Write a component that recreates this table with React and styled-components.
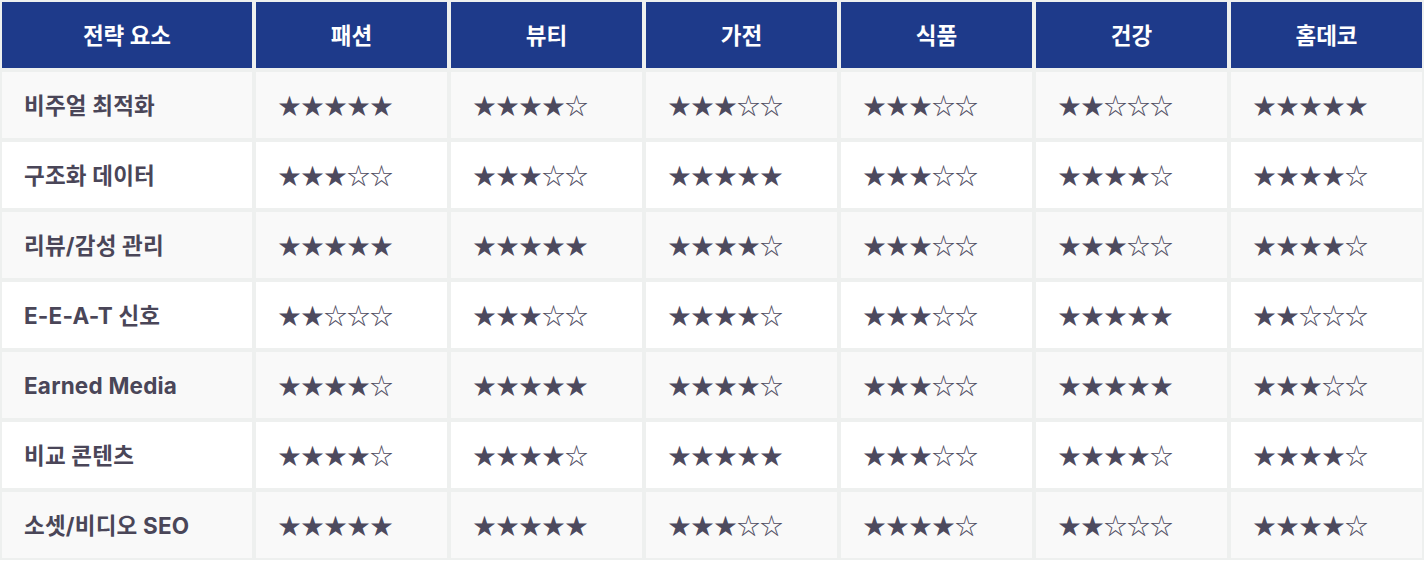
import React from "react";
import styled, { createGlobalStyle } from "styled-components";

const Global = createGlobalStyle`
  html, body { margin: 0; padding: 0; background: #ffffff; }
  body { font-family: "Inter", "Noto Sans CJK KR", sans-serif; }
`;

const Table = styled.table`
  width: 1424px;
  border-collapse: separate;
  border-spacing: 0;
  table-layout: fixed;
`;

const HeadCell = styled.th`
  box-sizing: border-box;
  height: 70px;
  padding: 0;
  border: 2px solid #eef0ef;
  background: #1e3a8a;
  color: #ffffff;
  font-family: "Inter", "Noto Sans CJK KR", sans-serif;
  font-size: 22.5px;
  line-height: 1.2;
  font-weight: 700;
  text-align: center;
  width: ${(p) => (p.$first ? "254px" : "auto")};
`;

const Row = styled.tr`
  background: ${(p) => (p.$alt ? "#f9f9f9" : "#ffffff")};
`;

const LabelCell = styled.td`
  box-sizing: border-box;
  height: 70px;
  padding: 0 0 0 22px;
  border: 2px solid #eef0ef;
  color: #4a4658;
  font-family: "Inter", "Noto Sans CJK KR", sans-serif;
  font-size: 22.5px;
  line-height: 1.2;
  font-weight: 700;
  letter-spacing: 0.2px;
  text-align: left;
`;

const StarCell = styled.td`
  box-sizing: border-box;
  height: 70px;
  padding: 0 0 2px 22px;
  border: 2px solid #eef0ef;
  color: #4d4a5e;
  font-family: "Noto Sans CJK KR", sans-serif;
  font-size: 23px;
  line-height: 1;
  text-align: left;
  white-space: nowrap;
`;

const columns = ["패션", "뷰티", "가전", "식품", "건강", "홈데코"];

const rows = [
  ["비주얼 최적화", [5, 4, 3, 3, 2, 5]],
  ["구조화 데이터", [3, 3, 5, 3, 4, 4]],
  ["리뷰/감성 관리", [5, 5, 4, 3, 3, 4]],
  ["E-E-A-T 신호", [2, 3, 4, 3, 5, 2]],
  ["Earned Media", [4, 5, 4, 3, 5, 3]],
  ["비교 콘텐츠", [4, 4, 5, 3, 4, 4]],
  ["소셋/비디오 SEO", [5, 5, 3, 4, 2, 4]],
];

const stars = (n) => "★".repeat(n) + "☆".repeat(5 - n);

export default function App() {
  return (
    <>
      <Global />
      <Table>
        <thead>
          <tr>
            <HeadCell $first>전략 요소</HeadCell>
            {columns.map((c) => (
              <HeadCell key={c}>{c}</HeadCell>
            ))}
          </tr>
        </thead>
        <tbody>
          {rows.map(([label, vals], i) => (
            <Row key={label} $alt={i % 2 === 0}>
              <LabelCell>{label}</LabelCell>
              {vals.map((v, j) => (
                <StarCell key={j}>{stars(v)}</StarCell>
              ))}
            </Row>
          ))}
        </tbody>
      </Table>
    </>
  );
}
